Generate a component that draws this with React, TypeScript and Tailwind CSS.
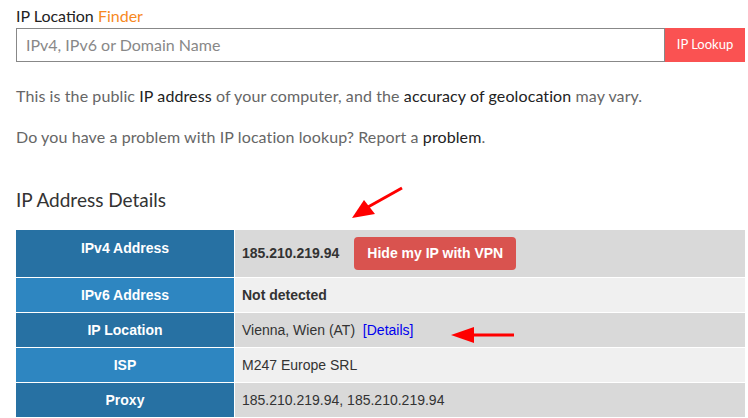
import React from 'react';

interface Row {
    label: string;
    value: React.ReactNode;
    tall?: boolean;
}

const rows: Row[] = [
    {
        label: 'IPv4 Address',
        tall: true,
        value: (
            <div className="flex items-center gap-[15px]">
                <span className="font-bold">185.210.219.94</span>
                <button className="h-[33px] px-[13px] rounded-[4px] bg-[#d9534f] text-white font-bold text-[14px]">
                    Hide my IP with VPN
                </button>
            </div>
        )
    },
    { label: 'IPv6 Address', value: <span className="font-bold">Not detected</span> },
    {
        label: 'IP Location',
        value: (
            <span>
                Vienna, Wien (AT)&nbsp;&nbsp;<a className="text-[#0000ee]">[Details]</a>
            </span>
        )
    },
    { label: 'ISP', value: 'M247 Europe SRL' },
    { label: 'Proxy', value: '185.210.219.94, 185.210.219.94' }
];

// red annotation arrows drawn over the page
const Arrows = () => (
    <svg className="absolute inset-0 pointer-events-none" width="748" height="418">
        <line x1="402" y1="188" x2="368" y2="207" stroke="#ff0000" strokeWidth="3" />
        <polygon points="352,218 364,200 375,214" fill="#ff0000" />
        <line x1="514" y1="335" x2="470" y2="335" stroke="#ff0000" strokeWidth="3" />
        <polygon points="451,335 474,327 474,343" fill="#ff0000" />
    </svg>
);

export default function App() {
    return (
        <div className="relative w-[748px] h-[418px] overflow-hidden bg-white pl-4 pr-[3px] font-['Lato',sans-serif]">
            <div className="pt-[6px] text-[16px] leading-[20px] text-[#222]">
                IP Location <span className="text-[#f7891f]">Finder</span>
            </div>

            <div className="mt-[2px] flex h-[34px]">
                <div className="flex-1 border border-[#888] flex items-center px-[9px] text-[16px] text-[#888]">
                    IPv4, IPv6 or Domain Name
                </div>
                <button className="w-[80px] bg-[#fa5252] text-white text-[13px]">IP Lookup</button>
            </div>

            <p className="mt-[22px] text-[16px] leading-[24px] text-[#666] tracking-[0.1px]">
                This is the public <span className="text-[#222]">IP address</span> of your computer, and the{' '}
                <span className="text-[#222]">accuracy of geolocation</span> may vary.
            </p>
            <p className="mt-[17px] text-[16px] leading-[24px] text-[#666] tracking-[0.1px]">
                Do you have a problem with IP location lookup? Report a <span className="text-[#222]">problem</span>.
            </p>

            <h2 className="mt-[37px] text-[19px] leading-[28px] text-[#333]">IP Address Details</h2>

            <div className="mt-4 grid grid-cols-[218px_1fr] gap-px bg-white font-['Liberation_Sans',Arial,sans-serif] text-[14px] text-[#333]">
                {rows.map((row, idx) => (
                    <React.Fragment key={idx}>
                        <div
                            className={`${idx % 2 === 0 ? 'bg-[#2771a3]' : 'bg-[#2e86c1]'} text-white font-bold text-center ${row.tall ? 'h-[47px] pt-[8px] leading-[20px]' : 'h-[34px] flex items-center justify-center'}`}
                        >
                            {row.label}
                        </div>
                        <div
                            className={`${idx % 2 === 0 ? 'bg-[#d9d9d9]' : 'bg-[#f0f0f0]'} flex items-center pl-[7px] ${row.tall ? 'h-[47px]' : 'h-[34px]'}`}
                        >
                            {row.value}
                        </div>
                    </React.Fragment>
                ))}
            </div>

            <Arrows />
        </div>
    );
}
